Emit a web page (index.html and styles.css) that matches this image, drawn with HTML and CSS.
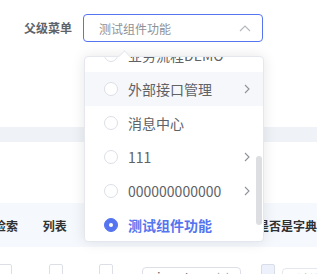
FILE: index.html
```html
<!DOCTYPE html>
<html lang="zh">
<head>
<meta charset="utf-8">
<link rel="stylesheet" href="styles.css">
</head>
<body>
<div class="page">
  <div class="form-item">
    <label class="form-label">父级菜单</label>
    <div class="select is-focus">
      <span class="select-value">测试组件功能</span>
      <svg class="select-arrow" width="12" height="7" viewBox="0 0 12 7"><path d="M1 6 L6 1 L11 6" fill="none" stroke="#b4b7bd" stroke-width="1.1"/></svg>
    </div>
  </div>

  <div class="band-gray"></div>

  <div class="thead">
    <div class="th th-search">检索</div>
    <div class="th th-list">列表</div>
    <div class="th th-dict">是否是字典</div>
  </div>

  <div class="trow">
    <span class="checkbox cb-1"></span>
    <span class="checkbox cb-2"></span>
    <span class="checkbox cb-3"></span>
    <div class="mini-select">
      <span class="mini-value">input</span>
      <svg class="mini-arrow" width="12" height="7" viewBox="0 0 12 7"><path d="M1 1 L6 6 L11 1" fill="none" stroke="#b4b7bd" stroke-width="1.1"/></svg>
    </div>
    <span class="checkbox cb-4"></span>
    <div class="mini-input"><span class="mini-placeholder">请选择</span></div>
  </div>

  <div class="dropdown">
    <div class="caret"></div>
    <div class="menu">
      <ul class="menu-list">
        <li class="item"><span class="radio"></span><span class="label">业务流程DEMO</span></li>
        <li class="item is-hover"><span class="radio"></span><span class="label">外部接口管理</span><svg class="chev" width="6" height="10" viewBox="0 0 6 10"><path d="M1 1 L5 5 L1 9" fill="none" stroke="#8f9299" stroke-width="1.1"/></svg></li>
        <li class="item"><span class="radio"></span><span class="label">消息中心</span></li>
        <li class="item"><span class="radio"></span><span class="label">111</span><svg class="chev" width="6" height="10" viewBox="0 0 6 10"><path d="M1 1 L5 5 L1 9" fill="none" stroke="#8f9299" stroke-width="1.1"/></svg></li>
        <li class="item"><span class="radio"></span><span class="label">000000000000</span><svg class="chev" width="6" height="10" viewBox="0 0 6 10"><path d="M1 1 L5 5 L1 9" fill="none" stroke="#8f9299" stroke-width="1.1"/></svg></li>
        <li class="item is-active"><span class="radio is-checked"></span><span class="label">测试组件功能</span></li>
      </ul>
      <div class="scrollbar"></div>
    </div>
  </div>
</div>
</body>
</html>
```

FILE: styles.css
```css
* { box-sizing: border-box; }
html, body { margin: 0; padding: 0; background: #fff; }
body {
  font-family: "Noto Sans CJK SC", "Noto Sans", sans-serif;
  color: #606266;
}
.page {
  position: relative;
  width: 317px;
  height: 274px;
  overflow: hidden;
  background: #fff;
}

/* form item */
.form-item {
  display: flex;
  align-items: center;
  padding-top: 14px;
  height: 42px;
}
.form-label {
  margin-left: 24px;
  width: 59px;
  font-size: 12px;
  font-weight: 700;
  color: #5f6267;
  line-height: 28px;
}
.select {
  width: 180px;
  height: 28px;
  border: 1px solid #5575f0;
  border-radius: 4px;
  display: flex;
  align-items: center;
  padding: 0 11px 0 15px;
}
.select-value {
  flex: 1;
  font-size: 12px;
  color: #8e9196;
}
.select-arrow { display: block; }

/* gray band */
.band-gray {
  margin-top: 85px;
  height: 15px;
  background: #eff2f6;
}

/* table header */
.thead {
  margin-top: 61px;
  height: 44px;
  background: #f5f8fd;
  display: flex;
  align-items: center;
  font-size: 12px;
  font-weight: 700;
  color: #303133;
}
.th { white-space: nowrap; }
.th-search { margin-left: -6px; width: 50px; }
.th-list { width: 214px; }
.th-dict { margin-left: 6px; }

/* table row */
.trow {
  position: relative;
  margin-top: 17px;
  height: 30px;
  display: flex;
  align-items: flex-start;
}
.checkbox {
  width: 14px;
  height: 14px;
  border: 1px solid #dcdfe6;
  border-radius: 2px;
  background: #fff;
  flex: none;
}
.cb-1 { margin-left: -2px; }
.cb-2 { margin-left: 37px; }
.cb-3 { margin-left: 36px; }
.cb-4 { margin-left: 20px; background: #edf1fb; border-color: #d9dde8; }
.mini-select {
  margin-left: 29px;
  margin-top: 3px;
  width: 99px;
  height: 28px;
  border: 1px solid #dcdfe6;
  border-radius: 4px;
  display: flex;
  align-items: flex-start;
  padding: 0 11px 0 14px;
  flex: none;
}
.mini-value { flex: 1; font-size: 13px; color: #606266; line-height: 16px; margin-top: 1px; }
.mini-arrow { margin-top: 4px; }
.mini-input {
  margin-left: 7px;
  margin-top: 4px;
  width: 80px;
  height: 28px;
  border: 1px solid #e4e7ed;
  border-radius: 4px;
  padding: 0 0 0 14px;
  flex: none;
  line-height: 16px;
}
.mini-placeholder { font-size: 13px; color: #c0c4cc; }

/* dropdown */
.dropdown {
  position: absolute;
  left: 84px;
  top: 56px;
  width: 180px;
  height: 186px;
  background: #fff;
  border: 1px solid #e4e7ed;
  border-radius: 4px;
  box-shadow: 0 0 14px rgba(0, 0, 0, 0.1);
}
.caret {
  position: absolute;
  left: 35px;
  top: -5px;
  width: 9px;
  height: 9px;
  background: #fff;
  border-top: 1px solid #e4e7ed;
  border-left: 1px solid #e4e7ed;
  transform: rotate(45deg);
}
.menu {
  position: relative;
  height: 100%;
  overflow: hidden;
  border-radius: 4px;
}
.menu-list {
  list-style: none;
  margin: -19px 0 0 0;
  padding: 0;
}
.item {
  height: 34px;
  display: flex;
  align-items: center;
  padding: 0 13px 0 19px;
  font-size: 14px;
  color: #606266;
}
.item.is-hover { background: #f5f7fa; }
.item .label { flex: 1; margin-left: 10px; white-space: nowrap; }
.item.is-active .label { color: #5575f0; font-weight: 700; }
.radio {
  width: 14px;
  height: 14px;
  border: 1px solid #dcdfe6;
  border-radius: 50%;
  background: #fff;
  flex: none;
  position: relative;
}
.radio.is-checked {
  background: #5575f0;
  border-color: #5575f0;
}
.radio.is-checked::after {
  content: "";
  position: absolute;
  left: 4px;
  top: 4px;
  width: 4px;
  height: 4px;
  border-radius: 50%;
  background: #fff;
}
.chev { display: block; flex: none; }
.scrollbar {
  position: absolute;
  left: 171px;
  top: 99px;
  width: 6px;
  height: 69px;
  border-radius: 3px;
  background: #dddee1;
}
```
